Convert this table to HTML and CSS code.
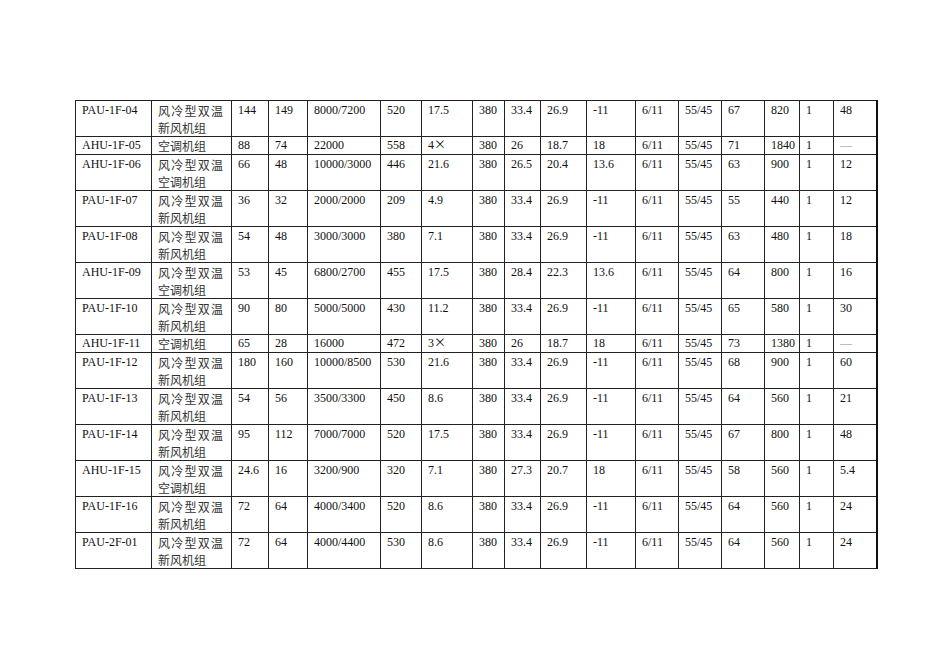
FILE: index.html
```html
<!DOCTYPE html>
<html lang="zh">
<head>
<meta charset="utf-8">
<title>设备表</title>
<link rel="stylesheet" href="styles.css">
</head>
<body>
<div class="page">
<table class="spec">
<colgroup>
<col class="c1"><col class="c2"><col class="c3"><col class="c4"><col class="c5"><col class="c6"><col class="c7"><col class="c8"><col class="c9"><col class="c10"><col class="c11"><col class="c12"><col class="c13"><col class="c14"><col class="c15"><col class="c16"><col class="c17">
</colgroup>
<tbody>
<tr><td>PAU-1F-04</td><td class="zh">风冷型双温新风机组</td><td>144</td><td>149</td><td>8000/7200</td><td>520</td><td>17.5</td><td>380</td><td>33.4</td><td>26.9</td><td>-11</td><td>6/11</td><td>55/45</td><td>67</td><td>820</td><td>1</td><td>48</td></tr>
<tr class="single"><td>AHU-1F-05</td><td class="zh">空调机组</td><td>88</td><td>74</td><td>22000</td><td>558</td><td>4<span class="x">×</span></td><td>380</td><td>26</td><td>18.7</td><td>18</td><td>6/11</td><td>55/45</td><td>71</td><td>1840</td><td>1</td><td class="dash">—</td></tr>
<tr><td>AHU-1F-06</td><td class="zh">风冷型双温空调机组</td><td>66</td><td>48</td><td>10000/3000</td><td>446</td><td>21.6</td><td>380</td><td>26.5</td><td>20.4</td><td>13.6</td><td>6/11</td><td>55/45</td><td>63</td><td>900</td><td>1</td><td>12</td></tr>
<tr><td>PAU-1F-07</td><td class="zh">风冷型双温新风机组</td><td>36</td><td>32</td><td>2000/2000</td><td>209</td><td>4.9</td><td>380</td><td>33.4</td><td>26.9</td><td>-11</td><td>6/11</td><td>55/45</td><td>55</td><td>440</td><td>1</td><td>12</td></tr>
<tr><td>PAU-1F-08</td><td class="zh">风冷型双温新风机组</td><td>54</td><td>48</td><td>3000/3000</td><td>380</td><td>7.1</td><td>380</td><td>33.4</td><td>26.9</td><td>-11</td><td>6/11</td><td>55/45</td><td>63</td><td>480</td><td>1</td><td>18</td></tr>
<tr><td>AHU-1F-09</td><td class="zh">风冷型双温空调机组</td><td>53</td><td>45</td><td>6800/2700</td><td>455</td><td>17.5</td><td>380</td><td>28.4</td><td>22.3</td><td>13.6</td><td>6/11</td><td>55/45</td><td>64</td><td>800</td><td>1</td><td>16</td></tr>
<tr><td>PAU-1F-10</td><td class="zh">风冷型双温新风机组</td><td>90</td><td>80</td><td>5000/5000</td><td>430</td><td>11.2</td><td>380</td><td>33.4</td><td>26.9</td><td>-11</td><td>6/11</td><td>55/45</td><td>65</td><td>580</td><td>1</td><td>30</td></tr>
<tr class="single"><td>AHU-1F-11</td><td class="zh">空调机组</td><td>65</td><td>28</td><td>16000</td><td>472</td><td>3<span class="x">×</span></td><td>380</td><td>26</td><td>18.7</td><td>18</td><td>6/11</td><td>55/45</td><td>73</td><td>1380</td><td>1</td><td class="dash">—</td></tr>
<tr><td>PAU-1F-12</td><td class="zh">风冷型双温新风机组</td><td>180</td><td>160</td><td>10000/8500</td><td>530</td><td>21.6</td><td>380</td><td>33.4</td><td>26.9</td><td>-11</td><td>6/11</td><td>55/45</td><td>68</td><td>900</td><td>1</td><td>60</td></tr>
<tr><td>PAU-1F-13</td><td class="zh">风冷型双温新风机组</td><td>54</td><td>56</td><td>3500/3300</td><td>450</td><td>8.6</td><td>380</td><td>33.4</td><td>26.9</td><td>-11</td><td>6/11</td><td>55/45</td><td>64</td><td>560</td><td>1</td><td>21</td></tr>
<tr><td>PAU-1F-14</td><td class="zh">风冷型双温新风机组</td><td>95</td><td>112</td><td>7000/7000</td><td>520</td><td>17.5</td><td>380</td><td>33.4</td><td>26.9</td><td>-11</td><td>6/11</td><td>55/45</td><td>67</td><td>800</td><td>1</td><td>48</td></tr>
<tr><td>AHU-1F-15</td><td class="zh">风冷型双温空调机组</td><td>24.6</td><td>16</td><td>3200/900</td><td>320</td><td>7.1</td><td>380</td><td>27.3</td><td>20.7</td><td>18</td><td>6/11</td><td>55/45</td><td>58</td><td>560</td><td>1</td><td>5.4</td></tr>
<tr><td>PAU-1F-16</td><td class="zh">风冷型双温新风机组</td><td>72</td><td>64</td><td>4000/3400</td><td>520</td><td>8.6</td><td>380</td><td>33.4</td><td>26.9</td><td>-11</td><td>6/11</td><td>55/45</td><td>64</td><td>560</td><td>1</td><td>24</td></tr>
<tr><td>PAU-2F-01</td><td class="zh">风冷型双温新风机组</td><td>72</td><td>64</td><td>4000/4400</td><td>530</td><td>8.6</td><td>380</td><td>33.4</td><td>26.9</td><td>-11</td><td>6/11</td><td>55/45</td><td>64</td><td>560</td><td>1</td><td>24</td></tr>
</tbody>
</table>
</div>
</body>
</html>
```

FILE: styles.css
```css
html, body {
  margin: 0;
  padding: 0;
  background: #ffffff;
}

.page {
  padding: 100px 0 0 75px;
}

.spec {
  border-collapse: collapse;
  table-layout: fixed;
  width: 801px;
  font-family: "Liberation Serif", "Noto Sans CJK SC", serif;
  font-size: 12px;
  line-height: 17px;
  color: #111;
  border-right: 2px solid #111;
}

.spec td {
  border: 1px solid #222;
  padding: 1px 4px 0 6px;
  vertical-align: top;
  text-align: left;
  white-space: nowrap;
  overflow: hidden;
}

.spec td.zh {
  white-space: normal;
  text-align: justify;
  padding: 1px 8px 0 6px;
  font-family: "Noto Sans CJK SC", sans-serif;
  font-size: 12px;
  color: #333;
}

.spec tr.single td {
  padding-top: 0;
}

.spec td:last-child {
  border-right: 2px solid #111;
}

.x {
  font-family: "Noto Sans CJK SC", sans-serif;
  font-size: 12px;
  line-height: 1;
}

.dash {
  color: #888;
}

.c1 { width: 76px; }
.c2 { width: 80px; }
.c3 { width: 37px; }
.c4 { width: 39px; }
.c5 { width: 73px; }
.c6 { width: 41px; }
.c7 { width: 51px; }
.c8 { width: 32px; }
.c9 { width: 36px; }
.c10 { width: 46px; }
.c11 { width: 49px; }
.c12 { width: 43px; }
.c13 { width: 43px; }
.c14 { width: 43px; }
.c15 { width: 35px; }
.c16 { width: 34px; }
.c17 { width: 43px; }
```
